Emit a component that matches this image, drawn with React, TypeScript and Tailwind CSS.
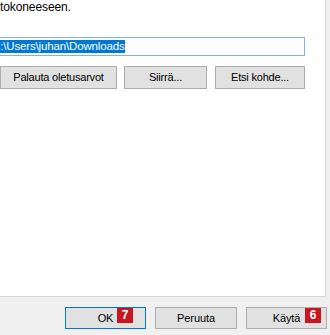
import React from "react";

const font = { fontFamily: '"Liberation Sans", Arial, sans-serif' };

function Badge({ n, left }: { n: string; left: string }) {
  return (
    <span
      className={`absolute top-[0px] ${left} w-[16px] h-[15px] bg-[#c8161e] text-white text-[12px] font-bold leading-[15px] flex items-center justify-center`}
    >
      {n}
    </span>
  );
}

export default function App() {
  return (
    <div
      className="w-[330px] h-[335px] bg-[#f0f0f0] flex flex-col overflow-hidden text-[#000]"
      style={font}
    >
      <div className="w-[326px] h-[297px] bg-white border-r border-b border-[#d8d8d8] flex flex-col shrink-0">
        <div className="text-[12px] leading-[15px] tracking-[-0.1px] whitespace-nowrap">
          tokoneeseen.
        </div>
        <div className="ml-[-10px] w-[315px] h-[19px] mt-[22px] border border-[#7eb4ea] bg-white flex items-center pl-[1px] overflow-hidden">
          <span className="bg-[#0078d7] text-white text-[11.5px] leading-[13px] tracking-[-0.15px] whitespace-nowrap">
            C:\Users\juhan\Downloads
          </span>
        </div>
        <div className="flex mt-[10px] text-[11px] tracking-[-0.2px]">
          <div className="w-[117px] h-[23px] bg-[#e1e1e1] border border-[#adadad] flex items-center justify-center">
            Palauta oletusarvot
          </div>
          <div className="ml-[7px] w-[83px] h-[23px] bg-[#e1e1e1] border border-[#adadad] flex items-center justify-center">
            Siirrä...
          </div>
          <div className="ml-[8px] w-[90px] h-[23px] bg-[#e1e1e1] border border-[#adadad] flex items-center justify-center">
            Etsi kohde...
          </div>
        </div>
      </div>
      <div className="flex justify-end gap-[9px] pr-[3px] mt-[10px] text-[11px] tracking-[-0.1px]">
        <div className="relative w-[81px] h-[22px] bg-[#e1e1e1] border border-[#0078d7] flex items-center justify-center">
          <span>OK</span>
          <Badge n="7" left="left-[51px]" />
        </div>
        <div className="relative w-[82px] h-[22px] bg-[#e1e1e1] border border-[#adadad] flex items-center justify-center">
          Peruuta
        </div>
        <div className="relative w-[81px] h-[22px] bg-[#e1e1e1] border border-[#adadad] flex items-center justify-center">
          <span>Käytä</span>
          <Badge n="6" left="left-[58px]" />
        </div>
      </div>
    </div>
  );
}
